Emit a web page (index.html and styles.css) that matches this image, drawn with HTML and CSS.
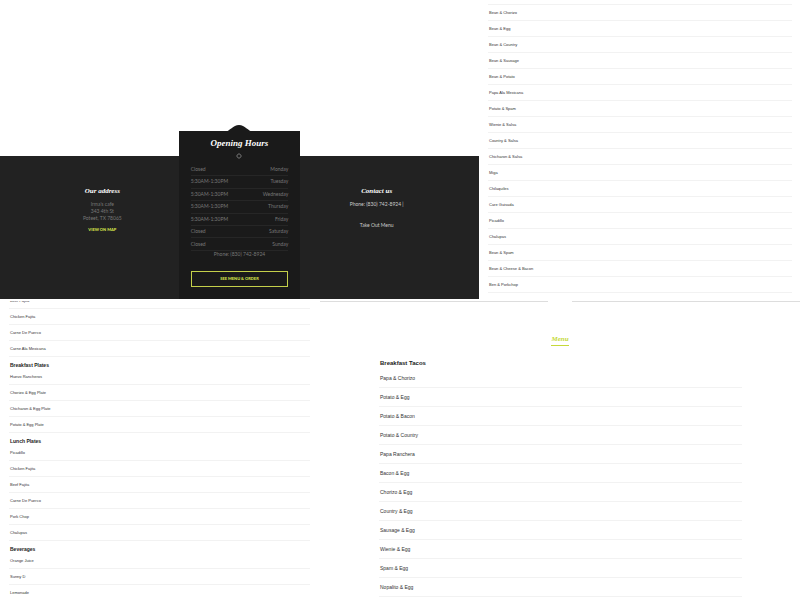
FILE: index.html
```html
<!DOCTYPE html>
<html lang="en">
<head>
  <meta charset="UTF-8">
  <meta name="viewport" content="width=device-width, initial-scale=1.0">
  <title>Irma's cafe</title>
  <link rel="stylesheet" href="styles.css">
</head>
<body>
  <div class="page">
    <div class="row top">
      <footer class="footer">
        <div class="info">
          <h2>Our address</h2>
          <p>Irma's cafe<br>343 4th St<br>Poteet, TX 78065</p>
          <a class="map" href="#">VIEW ON MAP</a>
        </div>

        <div class="hours">
          <svg class="hump" viewBox="0 0 28 7"><path d="M0 7C5 6 8 0 14 0S23 6 28 7Z" fill="#1a1a1a"/></svg>
          <h2>Opening Hours</h2>
          <svg class="clock" viewBox="0 0 6 6"><circle cx="3" cy="3" r="2" fill="none" stroke="#666"/><path d="M3 0V1M3 5V6M0 3H1M5 3H6M1 1L2 2M5 1L4 2M1 5L2 4M5 5L4 4" stroke="#555"/></svg>
          <table>
            <tr><td>Closed</td><td>Monday</td></tr>
            <tr><td>5:30AM-1:30PM</td><td>Tuesday</td></tr>
            <tr><td>5:30AM-1:30PM</td><td>Wednesday</td></tr>
            <tr><td>5:30AM-1:30PM</td><td>Thursday</td></tr>
            <tr><td>5:30AM-1:30PM</td><td>Friday</td></tr>
            <tr><td>Closed</td><td>Saturday</td></tr>
            <tr><td>Closed</td><td>Sunday</td></tr>
          </table>
          <p>Phone: (830) 742-8924</p>
          <a class="order" href="#menu">SEE MENU &amp; ORDER</a>
        </div>

        <div class="info contact">
          <h2>Contact us</h2>
          <p>Phone: (830) 742-8924 |</p>
          <a href="#menu">Take Out Menu</a>
        </div>
      </footer>

      <section class="list tacos">
        <ul>
          <li>Bean &amp; Chorizo</li>
          <li>Bean &amp; Egg</li>
          <li>Bean &amp; Country</li>
          <li>Bean &amp; Sausage</li>
          <li>Bean &amp; Potato</li>
          <li>Papa Ala Mexicana</li>
          <li>Potato &amp; Spam</li>
          <li>Wienie &amp; Salsa</li>
          <li>Country &amp; Salsa</li>
          <li>Chicharon &amp; Salsa</li>
          <li>Miga</li>
          <li>Chilaquiles</li>
          <li>Care Guisada</li>
          <li>Picadillo</li>
          <li>Chalupas</li>
          <li>Bean &amp; Spam</li>
          <li>Bean &amp; Cheese &amp; Bacon</li>
          <li>Ben &amp; Porkchop</li>
        </ul>
      </section>
    </div>

    <div class="row bottom">
      <section class="list plates">
        <ul>
          <li>Beef Fajita</li>
          <li>Chicken Fajita</li>
          <li>Carne De Puerco</li>
          <li>Carne Ala Mexicana</li>
        </ul>
        <h3>Breakfast Plates</h3>
        <ul>
          <li>Huevo Rancheros</li>
          <li>Chorizo &amp; Egg Plate</li>
          <li>Chicharon &amp; Egg Plate</li>
          <li>Potato &amp; Egg Plate</li>
        </ul>
        <h3>Lunch Plates</h3>
        <ul>
          <li>Picadillo</li>
          <li>Chicken Fajita</li>
          <li>Beef Fajita</li>
          <li>Carne De Puerco</li>
          <li>Pork Chop</li>
          <li>Chalupas</li>
        </ul>
        <h3>Beverages</h3>
        <ul>
          <li>Orange Juice</li>
          <li>Sunny D</li>
          <li>Lemonade</li>
        </ul>
      </section>

      <section class="menu" id="menu">
        <div class="divider"><span></span><span></span></div>
        <a class="tab" href="#menu">Menu</a>
        <div class="list large">
          <h3>Breakfast Tacos</h3>
          <ul>
            <li>Papa &amp; Chorizo</li>
            <li>Potato &amp; Egg</li>
            <li>Potato &amp; Bacon</li>
            <li>Potato &amp; Country</li>
            <li>Papa Ranchera</li>
            <li>Bacon &amp; Egg</li>
            <li>Chorizo &amp; Egg</li>
            <li>Country &amp; Egg</li>
            <li>Sausage &amp; Egg</li>
            <li>Wienie &amp; Egg</li>
            <li>Spam &amp; Egg</li>
            <li>Nopalito &amp; Egg</li>
          </ul>
        </div>
      </section>
    </div>
  </div>
</body>
</html>
```
FILE: styles.css
```css
* {
  padding: 0;
  margin: 0;
  box-sizing: border-box;
}

body {
  background: white;
  font-family: "Liberation Sans", Arial, sans-serif;
}

a {
  text-decoration: none;
}

ul {
  list-style: none;
}

.page {
  height: 100vh;
  display: grid;
  grid-template-rows: 1fr 1fr;
  gap: 2px;
}

.row {
  display: grid;
  min-height: 0;
  overflow: hidden;
}

.top {
  grid-template-columns: 479fr 321fr;
}

.bottom {
  grid-template-columns: 2fr 3fr;
}

/* footer */
.footer {
  align-self: end;
  display: grid;
  grid-template-columns: 179fr 122fr 179fr;
  background: #222;
  color: #777;
  font-family: Lato, sans-serif;
  font-size: 5px;
  line-height: 7px;
  text-align: center;
}

.footer h2 {
  color: white;
  font-family: "Liberation Serif", serif;
  font-style: italic;
  font-size: 7px;
  line-height: 10px;
}

.info {
  padding: 30px 0 0 26px;
}

.info p {
  margin-top: 5px;
}

.info .map {
  display: block;
  margin-top: 4px;
  color: #d3e04a;
  font-size: 4px;
  font-weight: 900;
}

.contact {
  padding: 30px 26px 0 0;
  color: #ccc;
}

.contact a {
  display: block;
  margin-top: 14px;
  color: #ccc;
}

.hours {
  margin-top: -25px;
  padding: 0 12px 12px;
  background: #1a1a1a;
  display: flex;
  flex-direction: column;
}

.hump {
  width: 28px;
  height: 7px;
  margin-top: -6px;
  align-self: center;
}

.hours h2 {
  margin-top: 5px;
  font-size: 9px;
  line-height: 12px;
}

.clock {
  width: 6px;
  height: 6px;
  margin-top: 4px;
  align-self: center;
}

.hours table {
  width: 100%;
  height: 87px;
  margin-top: 5px;
  border-collapse: collapse;
}

.hours td {
  border-bottom: 1px solid #262626;
  text-align: left;
}

.hours td:last-child {
  text-align: right;
}

.order {
  margin-top: 13px;
  border: 1px solid #c4d04a;
  color: #d3e04a;
  font-size: 4px;
  font-weight: 900;
  line-height: 14px;
}

/* menu lists */
.list {
  color: #333;
  font-size: 4px;
}

.list li {
  height: 16px;
  padding: 0 1px;
  border-bottom: 1px solid #f2f2f2;
  line-height: 15px;
}

.list h3 {
  padding: 4px 1px 0;
  color: #222;
  font-size: 5px;
  line-height: 8px;
}

.tacos {
  padding: 4px 8px 0 9px;
}

.tacos ul {
  border-top: 1px solid #f2f2f2;
}

/* starts halfway through its first row */
.plates {
  margin-top: -8px;
  padding: 0 10px 0 9px;
}

.menu {
  min-height: 0;
  display: flex;
  flex-direction: column;
}

.divider {
  display: flex;
  gap: 24px;
}

.divider span {
  flex: 1;
  height: 1px;
  background: #ddd;
}

.tab {
  margin-top: 32px;
  align-self: center;
  border-bottom: 1px solid #c5d93b;
  color: #c5d93b;
  font-family: "Liberation Serif", serif;
  font-style: italic;
  font-weight: bold;
  font-size: 7px;
  line-height: 11px;
}

.large {
  margin-top: 8px;
  padding: 0 58px 0 59px;
  font-size: 5px;
}

.large h3 {
  padding-bottom: 1px;
  font-size: 6px;
  line-height: 10px;
}

.large li {
  height: 19px;
  line-height: 18px;
}
```
